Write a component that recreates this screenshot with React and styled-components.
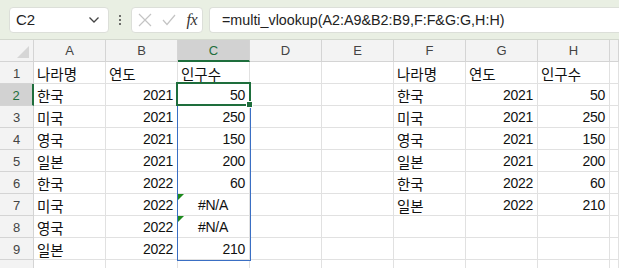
import React from "react";
import styled, { createGlobalStyle } from "styled-components";

const GlobalStyle = createGlobalStyle`
  html, body {
    margin: 0;
    padding: 0;
    background: #ffffff;
  }
  body {
    width: 619px;
    height: 268px;
    overflow: hidden;
    font-family: "Noto Sans CJK KR", "Liberation Sans", sans-serif;
  }
`;

const Window = styled.div`
  width: 619px;
  height: 268px;
  overflow: hidden;
  background: #ffffff;
`;

const FormulaBar = styled.div`
  height: 40px;
  box-sizing: border-box;
  background: #e9efe3;
  border-bottom: 1px solid #d3d8ce;
  display: flex;
  align-items: center;
  padding-left: 9px;
`;

const Box = styled.div`
  height: 26px;
  box-sizing: border-box;
  background: #ffffff;
  border: 1px solid #dcdfd9;
  border-radius: 4px;
  display: flex;
  align-items: center;
`;

const NameBox = styled(Box)`
  width: 100px;
  padding: 0 8px 0 6px;
  justify-content: space-between;
  font-family: "Liberation Sans", sans-serif;
  font-size: 15px;
  color: #222;
`;

const Dots = styled.div`
  width: 22px;
  display: flex;
  flex-direction: column;
  align-items: center;
  gap: 2px;

  span {
    width: 2px;
    height: 2px;
    background: #444;
    border-radius: 1px;
  }
`;

const ButtonGroup = styled(Box)`
  width: 72px;
  padding: 0 5px 0 6px;
  justify-content: space-between;
`;

const Fx = styled.span`
  font-family: "Liberation Serif", serif;
  font-style: italic;
  font-size: 16px;
  color: #333;
  letter-spacing: -0.5px;
`;

const FormulaInput = styled(Box)`
  flex: 1;
  margin-left: 6px;
  border-right: none;
  border-radius: 4px 0 0 4px;
  padding-left: 12px;
  font-family: "Liberation Sans", sans-serif;
  font-size: 14.3px;
  color: #222;
`;

const Sheet = styled.div`
  position: relative;
  display: grid;
  grid-template-columns: 34px repeat(8, 72px) 1fr;
  grid-template-rows: 22px repeat(10, 22px);
`;

const Corner = styled.div`
  background: #f3f3f3;
  border-right: 1px solid #d4d4d4;
  border-bottom: 1px solid #d4d4d4;
  box-sizing: border-box;
  position: relative;
  overflow: hidden;

  &::after {
    content: "";
    position: absolute;
    right: 4px;
    bottom: 3px;
    width: 0;
    height: 0;
    border-left: 12px solid transparent;
    border-bottom: 12px solid #d6d6d6;
  }
`;

const ColHead = styled.div`
  box-sizing: border-box;
  background: ${(p) => (p.$active ? "#d2d2d2" : "#f3f3f3")};
  border-right: 1px solid #d4d4d4;
  border-bottom: ${(p) => (p.$active ? "2px solid #1e6e3c" : "1px solid #d4d4d4")};
  color: ${(p) => (p.$active ? "#1e6e3c" : "#444")};
  font-family: "Liberation Sans", sans-serif;
  font-size: 13px;
  display: flex;
  align-items: center;
  justify-content: center;
`;

const RowHead = styled.div`
  box-sizing: border-box;
  background: ${(p) => (p.$active ? "#d2d2d2" : "#f3f3f3")};
  border-right: ${(p) => (p.$active ? "2px solid #1e6e3c" : "1px solid #d4d4d4")};
  border-bottom: 1px solid #d4d4d4;
  color: ${(p) => (p.$active ? "#1e6e3c" : "#444")};
  font-family: "Liberation Sans", sans-serif;
  font-size: 13px;
  display: flex;
  align-items: center;
  justify-content: center;
  padding-top: 2px;
`;

const Cell = styled.div`
  box-sizing: border-box;
  position: relative;
  border-right: 1px solid #e1e1e1;
  border-bottom: 1px solid #e1e1e1;
  padding: 1px 4px 0 3px;
  font-family: ${(p) =>
    p.$num ? '"Liberation Sans", sans-serif' : '"Noto Sans CJK KR", sans-serif'};
  font-size: ${(p) => (p.$num ? "14px" : "14.5px")};
  line-height: 21px;
  color: #111;
  white-space: nowrap;
  text-align: ${(p) => p.$align || "left"};
  letter-spacing: ${(p) => (p.$num ? "-0.3px" : "0")};
`;

const ErrorMark = styled.span`
  position: absolute;
  left: 0;
  top: 0;
  width: 0;
  height: 0;
  border-top: 6px solid #1d8a1d;
  border-right: 6px solid transparent;
`;

const Range = styled.div`
  position: absolute;
  left: 177px;
  top: 43px;
  width: 74px;
  height: 178px;
  box-sizing: border-box;
  border: 1px solid #3a6fc4;
  pointer-events: none;
`;

const Active = styled.div`
  position: absolute;
  left: 176px;
  top: 42px;
  width: 75px;
  height: 24px;
  box-sizing: border-box;
  border: 2px solid #1e6e3c;
  pointer-events: none;

  &::after {
    content: "";
    position: absolute;
    right: -4px;
    bottom: -4px;
    width: 5px;
    height: 5px;
    background: #1e6e3c;
    border: 1px solid #ffffff;
  }
`;

const cols = ["A", "B", "C", "D", "E", "F", "G", "H", ""];

const left = [
  ["한국", 2021, "50"],
  ["미국", 2021, "250"],
  ["영국", 2021, "150"],
  ["일본", 2021, "200"],
  ["한국", 2022, "60"],
  ["미국", 2022, "#N/A"],
  ["영국", 2022, "#N/A"],
  ["일본", 2022, "210"],
];

const right = [
  ["한국", 2021, 50],
  ["미국", 2021, 250],
  ["영국", 2021, 150],
  ["일본", 2021, 200],
  ["한국", 2022, 60],
  ["일본", 2022, 210],
];

const Chevron = () => (
  <svg width="12" height="8" viewBox="0 0 12 8">
    <path d="M1.5 1.5 L6 6 L10.5 1.5" fill="none" stroke="#444" strokeWidth="1.3" />
  </svg>
);

const CrossIcon = () => (
  <svg width="14" height="14" viewBox="0 0 14 14">
    <path d="M1 1 L13 13 M13 1 L1 13" stroke="#c4c4c4" strokeWidth="1.2" />
  </svg>
);

const CheckIcon = () => (
  <svg width="14" height="12" viewBox="0 0 14 12">
    <path d="M1 6 L5 10.5 L13 1" fill="none" stroke="#c4c4c4" strokeWidth="1.2" />
  </svg>
);

const header = ["나라명", "연도", "인구수"];

const rowCells = (r) => {
  const head = r === 1;
  const l = head ? header : left[r - 2];
  const rr = head ? header : right[r - 2];
  const v = l ? l[2] : "";
  const isErr = v === "#N/A";
  const numAlign = head ? "left" : "right";

  return [
    <Cell key="a">{l ? l[0] : ""}</Cell>,
    <Cell key="b" $align={numAlign} $num={!head}>
      {l ? l[1] : ""}
    </Cell>,
    <Cell key="c" $align={isErr ? "center" : numAlign} $num={!head}>
      {isErr && <ErrorMark />}
      {v}
    </Cell>,
    <Cell key="d" />,
    <Cell key="e" />,
    <Cell key="f">{rr ? rr[0] : ""}</Cell>,
    <Cell key="g" $align={numAlign} $num={!head}>
      {rr ? rr[1] : ""}
    </Cell>,
    <Cell key="h" $align={numAlign} $num={!head}>
      {rr ? rr[2] : ""}
    </Cell>,
    <Cell key="i" />,
  ];
};

export default function App() {
  const rows = [1, 2, 3, 4, 5, 6, 7, 8, 9, 10];
  return (
    <Window>
      <GlobalStyle />
      <FormulaBar>
        <NameBox>
          <span>C2</span>
          <Chevron />
        </NameBox>
        <Dots>
          <span />
          <span />
          <span />
        </Dots>
        <ButtonGroup>
          <CrossIcon />
          <CheckIcon />
          <Fx>fx</Fx>
        </ButtonGroup>
        <FormulaInput>=multi_vlookup(A2:A9&amp;B2:B9,F:F&amp;G:G,H:H)</FormulaInput>
      </FormulaBar>
      <Sheet>
        <Corner />
        {cols.map((c) => (
          <ColHead key={c || "x"} $active={c === "C"}>
            {c}
          </ColHead>
        ))}
        {rows.map((r) => (
          <React.Fragment key={r}>
            <RowHead $active={r === 2}>{r < 10 ? r : ""}</RowHead>
            {rowCells(r)}
          </React.Fragment>
        ))}
        <Range />
        <Active />
      </Sheet>
    </Window>
  );
}
